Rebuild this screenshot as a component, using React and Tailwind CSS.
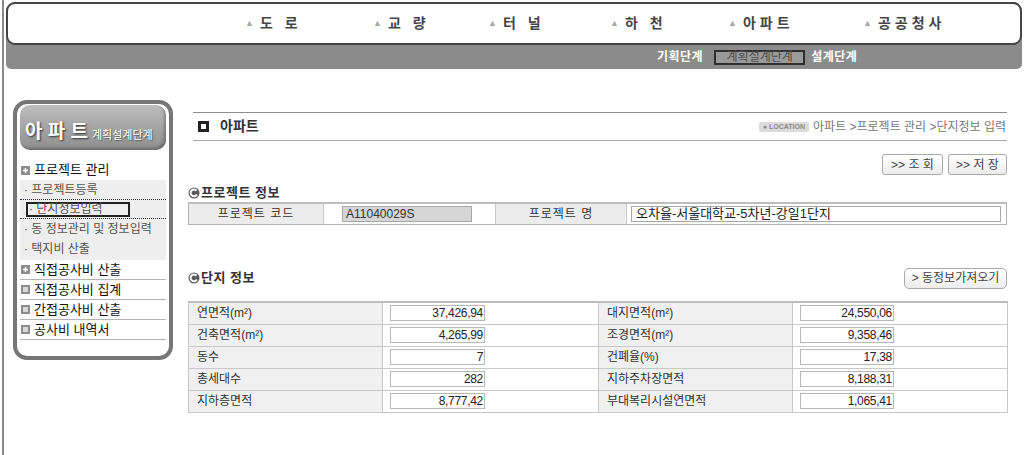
// App.jsx - 아파트 계획설계단계 : 단지정보 입력 화면
const FONT = "font-['Liberation_Sans','Noto_Sans_CJK_KR',sans-serif]"

const navItems = [
  { label: '도 로', w: 'w-[128px]' },
  { label: '교 량', w: 'w-[115px]' },
  { label: '터 널', w: 'w-[122px]' },
  { label: '하 천', w: 'w-[118px]' },
  { label: '아파트', w: 'w-[135px]' },
  { label: '공공청사', w: 'w-[120px]' },
]

const leftRows = [
  ['연면적(m²)', '37,426,94'],
  ['건축면적(m²)', '4,265,99'],
  ['동수', '7'],
  ['총세대수', '282'],
  ['지하층면적', '8,777,42'],
]

const rightRows = [
  ['대지면적(m²)', '24,550,06'],
  ['조경면적(m²)', '9,358,46'],
  ['건폐율(%)', '17,38'],
  ['지하주차장면적', '8,188,31'],
  ['부대복리시설연면적', '1,065,41'],
]

function Bullet() {
  return (
    <svg width="12" height="12" viewBox="0 0 12 12" className="shrink-0">
      <circle cx="6" cy="6" r="5.5" fill="#5a5a5a" />
      <path d="M8.6 3.6 A3.4 3.4 0 1 0 8.9 7.6" fill="none" stroke="#fff" strokeWidth="2" />
    </svg>
  )
}

function MenuIcon({ plus }) {
  return (
    <span className="w-[9px] h-[9px] bg-[#8d8d8d] flex items-center justify-center shrink-0">
      {plus ? (
        <svg width="7" height="7" viewBox="0 0 7 7">
          <path d="M3.5 1v5M1 3.5h5" stroke="#fff" strokeWidth="1.4" />
        </svg>
      ) : (
        <span className="w-[5px] h-[5px] bg-[#d8d8d8]" />
      )}
    </span>
  )
}

function Sidebar() {
  return (
    <div className="w-[160px] h-[260px] border-4 border-[#767676] rounded-[14px] bg-white">
      <div className="mx-[3px] mt-[1px] h-[45px] rounded-[10px] bg-gradient-to-b from-[#bdbdbd] to-[#8e8e8e] shadow-[inset_-2px_-2px_3px_rgba(0,0,0,0.25)] flex items-end pb-[9px] pl-[5px] gap-[4px]">
        <span className="text-[19px] leading-none font-bold text-white [text-shadow:1px_1px_2px_#333]">아 파 트</span>
        <span className="text-[11px] leading-none text-white [text-shadow:1px_1px_1px_#555]">계획설계단계</span>
      </div>

      <div className="mx-[3px] mt-[10px]">
        <div className="h-[20px] flex items-center gap-[4px] pl-[1px]">
          <MenuIcon plus />
          <span className="text-[13px] text-[#111]">프로젝트 관리</span>
        </div>
        <div className="bg-[#eeeeee] text-[12px] text-[#555] pb-[1px]">
          <div className="h-[19px] flex items-center pl-[4px]">· 프로젝트등록</div>
          <div className="h-[20px] flex items-center border-y border-dotted border-[#333]">
            <span className="ml-[6px] w-[104px] h-[15px] border-2 border-[#222] flex items-center pl-[1px] leading-none">· 단지정보입력</span>
          </div>
          <div className="h-[20px] flex items-center pl-[4px] whitespace-nowrap">· 동 정보관리 및 정보입력</div>
          <div className="h-[20px] flex items-center pl-[4px]">· 택지비 산출</div>
        </div>
        {[
          ['직접공사비 산출', true],
          ['직접공사비 집계', false],
          ['간접공사비 산출', false],
          ['공사비 내역서', false],
        ].map(([label, plus]) => (
          <div key={label} className="h-[20px] flex items-center gap-[4px] pl-[1px] border-b border-[#b5b5b5]">
            <MenuIcon plus={plus} />
            <span className="text-[13px] text-[#111]">{label}</span>
          </div>
        ))}
      </div>
    </div>
  )
}

function SmallButton({ children, className = '' }) {
  return (
    <button className={`h-[21px] border border-[#a9a9a9] rounded-[3px] bg-gradient-to-b from-white to-[#ececec] text-[12px] text-[#444] flex items-center justify-center ${className}`}>
      {children}
    </button>
  )
}

function InfoTable() {
  return (
    <table className="w-[819px] border-collapse border border-[#b0b0b0] border-t-2 border-t-[#bdbdbd] table-fixed">
      <colgroup>
        <col className="w-[194px]" />
        <col className="w-[216px]" />
        <col className="w-[194px]" />
        <col className="w-[215px]" />
      </colgroup>
      <tbody>
        {leftRows.map((row, i) => (
          <tr key={row[0]} className="h-[22px]">
            <td className="border border-[#c8c8c8] bg-[#f0f0f0] pl-[8px] text-[12px] text-[#333] leading-none">{row[0]}</td>
            <td className="border border-[#c8c8c8] bg-white pl-[7px]">
              <div className="w-[95px] h-[16px] border border-[#b8b8b8] text-right pr-[1px] text-[12px] tracking-[-0.3px] text-[#222] leading-[14px]">{row[1]}</div>
            </td>
            <td className="border border-[#c8c8c8] bg-[#f0f0f0] pl-[8px] text-[12px] text-[#333] leading-none">{rightRows[i][0]}</td>
            <td className="border border-[#c8c8c8] bg-white pl-[7px]">
              <div className="w-[94px] h-[16px] border border-[#b8b8b8] text-right pr-[1px] text-[12px] tracking-[-0.3px] text-[#222] leading-[14px]">{rightRows[i][1]}</div>
            </td>
          </tr>
        ))}
      </tbody>
    </table>
  )
}

export default function App() {
  return (
    <div className={`w-[1030px] h-[455px] bg-white flex overflow-hidden ${FONT}`}>
      <div className="ml-[2px] w-[2px] bg-[#8a8a8a] shrink-0" />

      <div className="pl-[2px] flex-1">
        {/* top navigation */}
        <div className="w-[1016px] mt-[2px] bg-[#8b8b8b] rounded-t-[9px] rounded-b-[5px]">
          <div className="h-[43px] bg-white border-2 border-[#454545] rounded-[9px] flex items-center pl-[237px]">
            {navItems.map((item) => (
              <div key={item.label} className={`${item.w} shrink-0 flex items-center`}>
                <span className="text-[9px] text-[#a8a8a8] mr-[6px]">▲</span>
                <span className="text-[14px] font-bold text-[#454545] tracking-[4px] whitespace-pre">{item.label}</span>
              </div>
            ))}
          </div>
          <div className="h-[24px] flex items-center pl-[651px] text-[12px] font-bold text-white">
            <span className="tracking-[0.5px]">기획단계</span>
            <span className="ml-[11px] h-[15px] w-[91px] border-2 border-[#2e2e2e] bg-[#9a9a9a] text-[#4e4e4e] font-normal flex items-center justify-center leading-none">계획설계단계</span>
            <span className="ml-[6px] tracking-[0.5px]">설계단계</span>
          </div>
        </div>

        <div className="flex">
          <div className="ml-[7px] mt-[31px]">
            <Sidebar />
          </div>

          {/* main */}
          <div className="ml-[15px] w-[819px] pt-[43px]">
            <div className="ml-[5px] h-[29px] border-t border-b border-t-[#8d8d8d] border-b-[#a8a8a8] flex items-center justify-between pr-[1px]">
              <div className="flex items-center gap-[11px] pl-[5px]">
                <span className="w-[11px] h-[11px] border-[3px] border-[#222] bg-white" />
                <span className="text-[14px] font-semibold text-[#333]">아파트</span>
              </div>
              <div className="flex items-center gap-[4px]">
                <span className="h-[10px] px-[4px] rounded-[2px] bg-[#dcdcdc] text-[7px] font-bold text-[#888] flex items-center leading-none">● LOCATION</span>
                <span className="text-[12px] text-[#777]">아파트 &gt;프로젝트 관리 &gt;단지정보 입력</span>
              </div>
            </div>

            <div className="mt-[13px] flex justify-end gap-[5px]">
              <SmallButton className="w-[61px]">&gt;&gt; 조 회</SmallButton>
              <SmallButton className="w-[59px]">&gt;&gt; 저 장</SmallButton>
            </div>

            <div className="mt-[11px] flex items-center gap-[1px] h-[14px]">
              <Bullet />
              <span className="text-[13px] font-bold text-[#333] tracking-[0.5px]">프로젝트 정보</span>
            </div>

            <div className="mt-[2px] h-[23px] flex border border-[#b0b0b0] border-t-2 border-t-[#bdbdbd] text-[12px]">
              <div className="w-[135px] bg-[#ececec] border-r border-[#c8c8c8] flex items-center justify-center text-[#333] tracking-[1px]">프로젝트 코드</div>
              <div className="w-[172px] border-r border-[#c8c8c8] flex items-center pl-[18px]">
                <div className="w-[130px] h-[16px] bg-[#d5d5d5] border border-[#a8a8a8] pl-[3px] text-[12px] text-[#333] leading-[14px]">A11040029S</div>
              </div>
              <div className="w-[131px] bg-[#ececec] border-r border-[#c8c8c8] flex items-center justify-center text-[#333] tracking-[1px]">프로젝트 명</div>
              <div className="flex-1 flex items-center pl-[4px]">
                <div className="w-[370px] h-[16px] border border-[#a8a8a8] pl-[4px] text-[13px] text-[#222] leading-[14px]">오차율-서울대학교-5차년-강일1단지</div>
              </div>
            </div>

            <div className="mt-[42px] h-[22px] flex items-center justify-between">
              <div className="flex items-center gap-[1px]">
                <Bullet />
                <span className="text-[13px] font-bold text-[#333] tracking-[0.5px]">단지 정보</span>
              </div>
              <SmallButton className="w-[103px] rounded-[5px]">&gt; 동정보가져오기</SmallButton>
            </div>

            <div className="mt-[12px]">
              <InfoTable />
            </div>
          </div>
        </div>
      </div>
    </div>
  )
}
